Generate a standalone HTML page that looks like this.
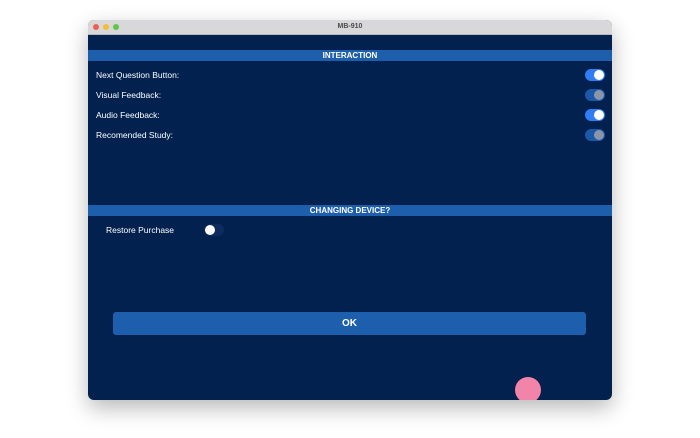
<html><head><style>
body{margin:0;width:700px;height:438px;background:#fff;position:relative;overflow:hidden;font-family:"Liberation Sans",sans-serif}
.win{position:absolute;left:88px;top:20px;width:524px;height:380px;border-radius:6px;overflow:hidden;background:#02214f;box-shadow:0 8px 22px rgba(0,0,0,.28)}
.tb{height:14px;background:#d8d7d9;position:relative;border-bottom:1px solid #b9b9bb}
.tb span.d{position:absolute;top:4px;width:6px;height:6px;border-radius:50%}
.tb .t{position:absolute;left:0;right:0;top:3px;text-align:center;font-size:7px;font-weight:bold;color:#4b4b4b;line-height:8px}
.hd{position:absolute;left:0;width:524px;height:11px;background:#1e5fad;color:#fff;font-size:8px;font-weight:bold;text-align:center;line-height:11px}
.lb{position:absolute;left:8px;color:#fff;font-size:8.5px;line-height:10px;top:0}
.tg{position:absolute;left:497px;width:20px;height:12px;border-radius:6px;background:#2f7ef5}
.tg i{position:absolute;right:1px;top:1px;width:10px;height:10px;border-radius:50%;background:#fff}
.tg.off{background:#1c58a8}.tg.off i{background:#8a96a8}
</style></head><body>
<div class="win">
<div class="tb"><span class="d" style="left:5px;background:#ef5f57"></span><span class="d" style="left:15px;background:#f5bd30"></span><span class="d" style="left:25px;background:#5fc847"></span><div class="t">MB-910</div></div>
<div class="hd" style="top:30px">INTERACTION</div>
<div class="lb" style="top:50px">Next Question Button:</div>
<div class="lb" style="top:70px">Visual Feedback:</div>
<div class="lb" style="top:90px">Audio Feedback:</div>
<div class="lb" style="top:110px">Recomended Study:</div>
<div class="tg" style="top:49px"><i></i></div>
<div class="tg off" style="top:69px"><i></i></div>
<div class="tg" style="top:89px"><i></i></div>
<div class="tg off" style="top:109px"><i></i></div>
<div class="hd" style="top:185px">CHANGING DEVICE?</div>
<div class="lb" style="left:18px;top:205px">Restore Purchase</div>
<div style="position:absolute;left:116px;top:204px;width:20px;height:12px;border-radius:6px;background:#0d2b5c"><i style="position:absolute;left:1px;top:1px;width:10px;height:10px;border-radius:50%;background:#fff"></i></div>
<div style="position:absolute;left:25px;top:292px;width:473px;height:23px;border-radius:3px;background:#1e5fad;color:#fff;font-weight:bold;font-size:10px;text-align:center;line-height:24px">OK</div>
<div style="position:absolute;left:427px;top:357px;width:26px;height:26px;border-radius:50%;background:#f184a8"></div>
</div>
</body></html>
